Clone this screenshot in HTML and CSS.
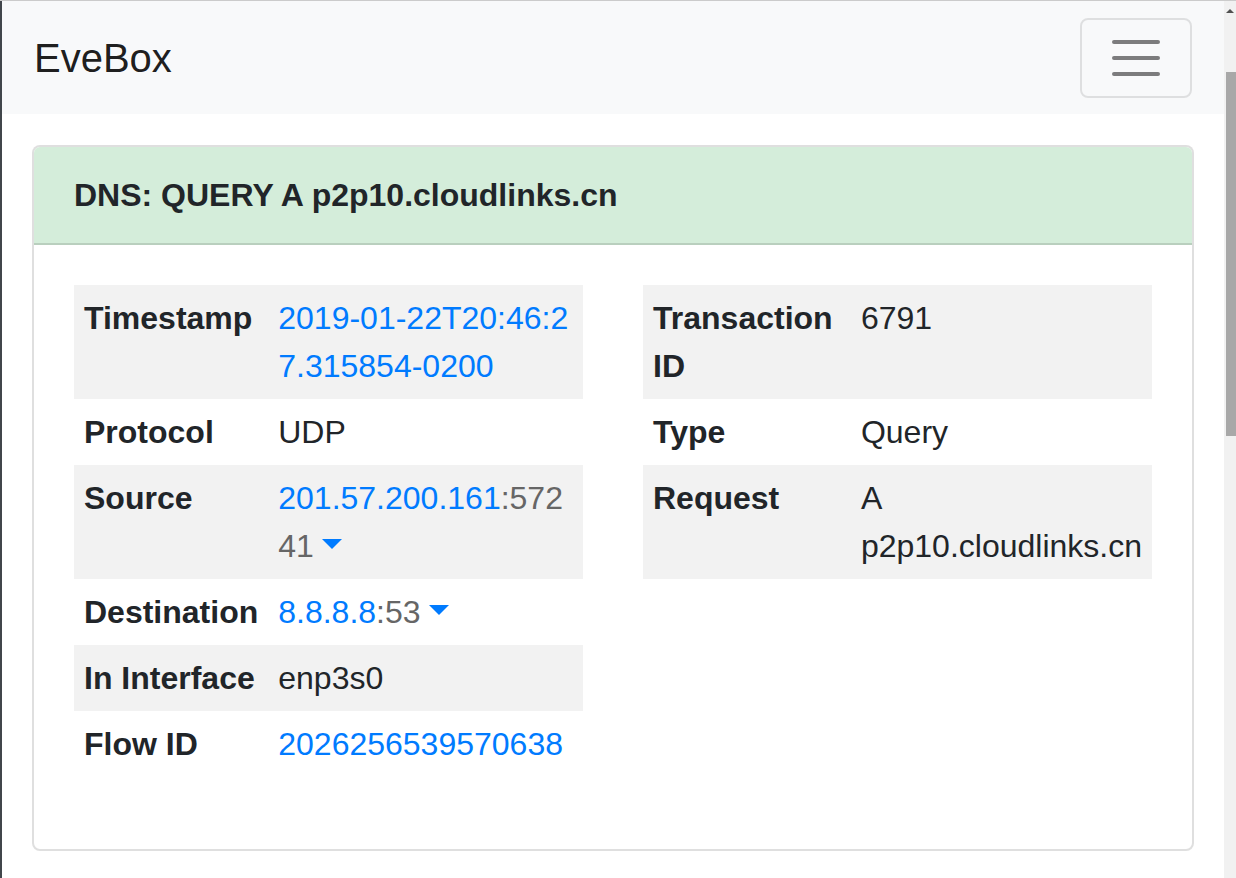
FILE: index.html
```html
<!DOCTYPE html>
<html lang="en">
<head>
<meta charset="utf-8">
<title>EveBox</title>
<link rel="stylesheet" href="styles.css">
</head>
<body>
<div class="frame">
  <div class="edge"></div>
  <div class="page">
    <nav class="navbar">
      <a class="brand" href="#">EveBox</a>
      <button class="toggler" type="button" aria-label="Toggle navigation">
        <svg class="toggler-icon" viewBox="0 0 30 30" width="60" height="60">
          <path d="M4 7h22M4 15h22M4 23h22" stroke="rgba(0,0,0,0.5)" stroke-width="2" stroke-linecap="round" fill="none"/>
        </svg>
      </button>
    </nav>
    <main class="container">
      <div class="card">
        <div class="card-header">
          <span class="title">DNS: QUERY A p2p10.cloudlinks.cn</span>
        </div>
        <div class="card-body">
          <div class="row">
            <div class="col">
              <table class="kv kv-left">
                <tr><th>Timestamp</th><td><a class="link" href="#">2019-01-22T20:46:27.315854-0200</a></td></tr>
                <tr><th>Protocol</th><td>UDP</td></tr>
                <tr><th>Source</th><td><a class="link" href="#">201.57.200.161</a><span class="port">:57241</span><span class="caret"></span></td></tr>
                <tr><th>Destination</th><td><a class="link" href="#">8.8.8.8</a><span class="port">:53</span><span class="caret"></span></td></tr>
                <tr><th>In Interface</th><td>enp3s0</td></tr>
                <tr><th>Flow ID</th><td><a class="link" href="#">2026256539570638</a></td></tr>
              </table>
            </div>
            <div class="col">
              <table class="kv kv-right">
                <tr><th>Transaction ID</th><td>6791</td></tr>
                <tr><th>Type</th><td>Query</td></tr>
                <tr><th>Request</th><td>A p2p10.cloudlinks.cn</td></tr>
              </table>
            </div>
          </div>
        </div>
      </div>
    </main>
  </div>
  <div class="scrollbar">
    <span class="arrow"></span>
    <div class="thumb"></div>
  </div>
</div>
</body>
</html>
```

FILE: styles.css
```css
* { box-sizing: border-box; }

html, body {
  margin: 0;
  padding: 0;
  height: 100%;
  overflow: hidden;
}

body {
  font-family: "Liberation Sans", Arial, sans-serif;
  font-size: 32px;
  line-height: 48px;
  color: #212529;
  background: #ffffff;
}

.frame {
  display: flex;
  height: 100vh;
  border-top: 1px solid #cbcbcb;
}

.edge {
  width: 2px;
  flex: 0 0 2px;
  background: #41464b;
}

.page {
  flex: 1 1 auto;
  min-width: 0;
  background: #ffffff;
}

.navbar {
  display: flex;
  align-items: center;
  justify-content: space-between;
  background: #f8f9fa;
  padding: 16px 32px;
}

.brand {
  display: inline-block;
  font-size: 40px;
  line-height: 60px;
  padding: 10px 0;
  color: rgba(0, 0, 0, 0.9);
  text-decoration: none;
}

.toggler {
  display: flex;
  align-items: center;
  justify-content: center;
  width: 112px;
  height: 80px;
  margin-top: 1px;
  padding: 8px 24px;
  background: transparent;
  border: 2px solid rgba(0, 0, 0, 0.1);
  border-radius: 8px;
}

.toggler-icon { display: block; }

.container {
  padding: 31px 30px 0;
}

.card {
  border: 2px solid rgba(0, 0, 0, 0.125);
  border-radius: 8px;
  background: #ffffff;
  overflow: hidden;
}

.card-header {
  background: #d4edda;
  padding: 24px 40px;
  border-bottom: 2px solid rgba(0, 0, 0, 0.125);
}

.title {
  font-weight: bold;
  font-size: 32px;
  line-height: 48px;
}

.card-body {
  padding: 40px 40px;
}

.row {
  display: flex;
  gap: 60px;
}

.col {
  flex: 1 1 0;
  min-width: 0;
}

.kv {
  width: 100%;
  border-collapse: collapse;
  margin-bottom: 32px;
}

.kv th,
.kv td {
  padding: 9px 10px;
  text-align: left;
  vertical-align: top;
}

.kv th { font-weight: bold; }

.kv tr:nth-child(odd) { background: #f2f2f2; }

.kv-left th { width: 194px; }
.kv-left td { word-break: break-all; }

.kv-right th { width: 208px; }

.link {
  color: #007bff;
  text-decoration: none;
}

.port { color: #666666; }

.caret {
  display: inline-block;
  width: 0;
  height: 0;
  margin-left: 8px;
  vertical-align: 8px;
  border-top: 10px solid #007bff;
  border-left: 10px solid transparent;
  border-right: 10px solid transparent;
}

.scrollbar {
  flex: 0 0 12px;
  width: 12px;
  background: #f1f1f1;
  display: flex;
  flex-direction: column;
  align-items: center;
  padding-top: 8px;
}

.arrow {
  display: block;
  width: 0;
  height: 0;
  border-left: 4px solid transparent;
  border-right: 4px solid transparent;
  border-bottom: 4px solid #505050;
}

.thumb {
  align-self: flex-end;
  width: 10px;
  height: 364px;
  margin-top: 59px;
  background: #a8a8a8;
}
```
